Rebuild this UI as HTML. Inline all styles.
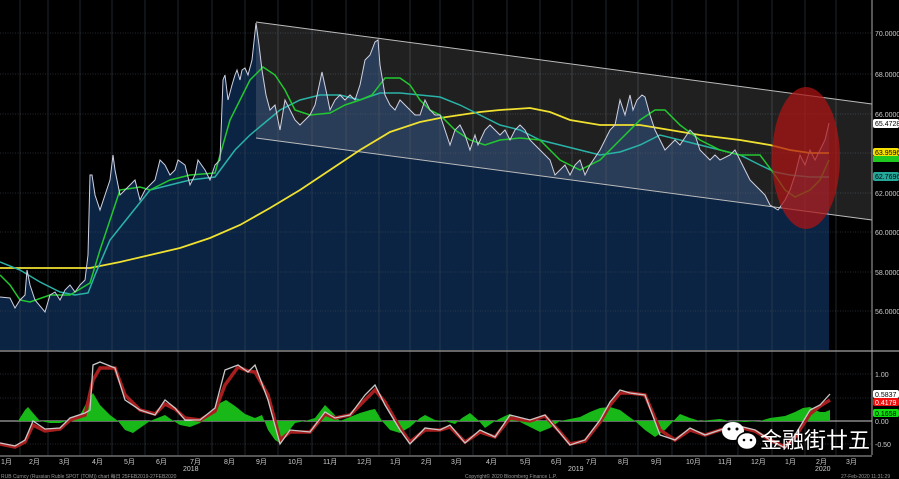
<!DOCTYPE html>
<html><head><meta charset="utf-8"><style>
html,body{margin:0;padding:0;background:#000;width:899px;height:479px;overflow:hidden}
svg{display:block}
text{font-family:"Liberation Sans","Noto Sans CJK SC",sans-serif}
</style></head><body>
<svg width="899" height="479" viewBox="0 0 899 479" xmlns="http://www.w3.org/2000/svg">
<rect width="899" height="479" fill="#000"/>
<!-- price area -->
<polygon fill="#0b2444" points="0,350 0,297 10,298 15,308 20,300 25,295 27,270 30,285 35,300 45,312 50,295 55,292 60,300 65,290 70,285 75,292 80,285 85,280 88,255 90,175 92,175 95,195 100,210 105,195 110,180 113,155 115,170 120,195 125,190 130,185 135,180 140,200 145,190 150,185 155,180 160,160 165,165 170,175 175,170 178,160 185,165 190,185 195,175 198,160 205,170 210,180 215,165 220,160 223,80 225,75 228,100 232,85 235,75 237,70 240,80 242,70 245,68 248,75 252,60 256,23 259,45 262,70 266,95 270,110 275,105 280,130 285,100 290,110 295,120 300,125 305,120 310,115 315,105 322,72 327,95 330,110 335,100 340,95 345,100 350,95 355,100 360,85 365,60 370,55 375,42 378,40 380,65 385,95 390,105 395,110 400,100 405,105 410,110 415,115 420,115 425,100 430,110 435,115 440,115 445,130 450,145 455,130 460,125 465,135 470,150 475,135 478,145 485,130 490,125 495,130 500,135 505,130 510,140 515,130 520,125 525,130 530,140 535,145 545,155 550,160 555,175 560,170 565,165 570,175 575,165 580,160 585,175 590,165 600,150 605,140 610,130 615,125 620,100 625,115 630,95 633,110 637,100 642,95 645,97 650,115 655,130 660,140 665,150 670,145 675,140 680,145 690,130 695,135 700,150 705,155 710,160 715,155 720,160 730,155 735,150 740,160 745,170 750,180 755,185 760,190 765,195 770,205 778,210 785,200 790,190 795,175 800,155 805,165 810,150 815,160 820,150 825,140 829,123 829,350"/>
<!-- grid -->
<g stroke="#3c4650" stroke-width="0.8" stroke-dasharray="1,1.5" opacity="0.8">
<line x1="0" y1="33" x2="872" y2="33"/><line x1="0" y1="74" x2="872" y2="74"/><line x1="0" y1="114" x2="872" y2="114"/><line x1="0" y1="153" x2="872" y2="153"/><line x1="0" y1="193" x2="872" y2="193"/><line x1="0" y1="232" x2="872" y2="232"/><line x1="0" y1="272" x2="872" y2="272"/><line x1="0" y1="311" x2="872" y2="311"/>
<line x1="0" y1="374" x2="872" y2="374"/><line x1="0" y1="398" x2="872" y2="398"/><line x1="0" y1="444" x2="872" y2="444"/>
</g>
<g stroke="#3c4650" stroke-width="0.8" opacity="0.7">
<line x1="20" y1="0" x2="20" y2="455"/><line x1="48" y1="0" x2="48" y2="455"/><line x1="80" y1="0" x2="80" y2="455"/><line x1="112" y1="0" x2="112" y2="455"/><line x1="145" y1="0" x2="145" y2="455"/><line x1="178" y1="0" x2="178" y2="455"/><line x1="212" y1="0" x2="212" y2="455"/><line x1="245" y1="0" x2="245" y2="455"/><line x1="278" y1="0" x2="278" y2="455"/><line x1="312" y1="0" x2="312" y2="455"/><line x1="346" y1="0" x2="346" y2="455"/><line x1="379" y1="0" x2="379" y2="455"/><line x1="410" y1="0" x2="410" y2="455"/><line x1="440" y1="0" x2="440" y2="455"/><line x1="473" y1="0" x2="473" y2="455"/><line x1="507" y1="0" x2="507" y2="455"/><line x1="540" y1="0" x2="540" y2="455"/><line x1="572" y1="0" x2="572" y2="455"/><line x1="606" y1="0" x2="606" y2="455"/><line x1="638" y1="0" x2="638" y2="455"/><line x1="672" y1="0" x2="672" y2="455"/><line x1="706" y1="0" x2="706" y2="455"/><line x1="738" y1="0" x2="738" y2="455"/><line x1="772" y1="0" x2="772" y2="455"/><line x1="805" y1="0" x2="805" y2="455"/><line x1="836" y1="0" x2="836" y2="455"/>
</g>
<!-- channel -->
<polygon fill="rgba(190,190,190,0.17)" points="256,22 872,104 872,220 256,138"/>
<line x1="256" y1="22" x2="872" y2="104" stroke="#bbb" stroke-width="1"/>
<line x1="256" y1="138" x2="872" y2="220" stroke="#bbb" stroke-width="1"/>
<!-- MAs -->
<polyline fill="none" stroke="#f0e030" stroke-width="1.8" points="0,268 50,268 90,268 120,262 150,255 180,248 210,238 240,225 270,208 300,190 330,170 360,150 390,132 420,122 440,118 460,115 480,112 500,110 530,108 550,112 570,120 600,125 640,125 670,130 700,135 740,140 770,145 790,150 810,153 829,153"/>
<polyline fill="none" stroke="#2ab3a8" stroke-width="1.5" points="0,262 20,270 40,282 60,292 75,295 88,293 95,275 110,240 130,215 150,190 170,185 190,180 215,177 235,150 250,135 262,125 280,110 300,100 320,95 340,95 360,100 380,93 400,93 420,95 440,97 460,105 480,115 500,125 520,130 540,140 560,145 580,150 600,155 620,152 640,145 660,135 680,140 700,145 720,150 740,155 760,165 775,172 790,175 810,177 829,177"/>
<polyline fill="none" stroke="#22c830" stroke-width="1.5" points="0,275 10,285 20,300 30,302 50,295 70,295 90,283 100,250 120,190 140,187 150,190 170,180 190,175 215,173 230,120 250,80 263,67 275,75 285,90 295,110 310,115 330,113 345,105 360,100 372,95 385,78 400,78 410,85 420,100 430,110 440,115 455,130 470,140 485,145 500,140 520,138 540,140 560,160 580,170 600,160 620,140 640,120 655,110 665,110 680,125 700,140 720,150 740,155 760,155 775,175 785,190 795,197 810,190 820,180 829,160"/>
<polyline fill="none" stroke="#d0d0e0" stroke-width="1" points="0,297 10,298 15,308 20,300 25,295 27,270 30,285 35,300 45,312 50,295 55,292 60,300 65,290 70,285 75,292 80,285 85,280 88,255 90,175 92,175 95,195 100,210 105,195 110,180 113,155 115,170 120,195 125,190 130,185 135,180 140,200 145,190 150,185 155,180 160,160 165,165 170,175 175,170 178,160 185,165 190,185 195,175 198,160 205,170 210,180 215,165 220,160 223,80 225,75 228,100 232,85 235,75 237,70 240,80 242,70 245,68 248,75 252,60 256,23 259,45 262,70 266,95 270,110 275,105 280,130 285,100 290,110 295,120 300,125 305,120 310,115 315,105 322,72 327,95 330,110 335,100 340,95 345,100 350,95 355,100 360,85 365,60 370,55 375,42 378,40 380,65 385,95 390,105 395,110 400,100 405,105 410,110 415,115 420,115 425,100 430,110 435,115 440,115 445,130 450,145 455,130 460,125 465,135 470,150 475,135 478,145 485,130 490,125 495,130 500,135 505,130 510,140 515,130 520,125 525,130 530,140 535,145 545,155 550,160 555,175 560,170 565,165 570,175 575,165 580,160 585,175 590,165 600,150 605,140 610,130 615,125 620,100 625,115 630,95 633,110 637,100 642,95 645,97 650,115 655,130 660,140 665,150 670,145 675,140 680,145 690,130 695,135 700,150 705,155 710,160 715,155 720,160 730,155 735,150 740,160 745,170 750,180 755,185 760,190 765,195 770,205 778,210 785,200 790,190 795,175 800,155 805,165 810,150 815,160 820,150 825,140 829,123"/>
<ellipse cx="806" cy="158" rx="34" ry="71" fill="rgba(175,20,20,0.72)"/>
<!-- separator -->
<line x1="0" y1="351" x2="899" y2="351" stroke="#888" stroke-width="1.5"/>
<line x1="872" y1="0" x2="872" y2="455" stroke="#aaa" stroke-width="1"/>
<line x1="0" y1="421" x2="872" y2="421" stroke="#ccc" stroke-width="1"/>
<line x1="0" y1="456" x2="872" y2="456" stroke="#aaa" stroke-width="1"/>
<!-- histogram -->
<polygon fill="#19b819" points="0,421 18,421 25,410 28,407 33,413 40,421 50,423 60,423 70,420 80,415 88,400 93,393 100,405 110,415 118,421 125,430 133,433 140,428 150,421 160,417 165,415 172,420 180,425 190,427 200,423 210,414 220,403 226,400 235,406 245,414 255,418 262,415 268,430 275,440 280,443 288,432 295,423 305,421 315,418 325,405 332,412 340,421 350,417 360,413 370,410 375,409 382,421 390,430 400,433 410,427 420,418 425,415 435,420 445,421 455,424 462,418 470,413 478,420 485,428 495,421 505,416 510,414 518,421 528,426 540,432 550,428 560,421 570,419 580,417 590,412 600,408 610,407 620,410 628,416 635,421 645,430 655,437 665,430 680,414 690,418 700,421 710,420 720,419 730,421 745,422 760,421 770,418 785,416 795,412 803,408 810,407 815,410 820,412 825,412 830,410 830,421"/>
<!-- oscillator lines -->
<polyline fill="none" stroke="#a81e1e" stroke-width="3.5" points="0,444 15,447 25,442 33,425 45,431 60,429 70,420 85,415 93,380 100,368 115,368 125,395 140,410 155,414 165,404 175,409 185,418 200,420 215,411 225,385 238,367 248,371 255,372 268,395 280,440 290,432 310,432 325,414 335,418 350,415 365,400 375,390 385,402 400,428 410,442 425,430 440,430 450,427 465,442 480,432 495,437 510,418 530,421 545,416 560,432 570,444 585,441 600,422 610,405 620,393 630,393 645,395 660,430 675,440 690,430 705,435 720,430 735,426 755,431 770,440 785,447 795,437 810,414 820,406 830,400"/>
<polyline fill="none" stroke="#c8c8c8" stroke-width="1.3" points="0,443 15,446 25,440 33,421 45,429 60,428 70,418 85,413 90,410 93,365 100,362 115,368 125,400 140,410 155,415 165,400 175,408 185,420 200,420 215,408 225,370 238,365 248,372 255,365 268,400 280,444 290,430 310,432 325,412 335,418 350,415 365,395 375,385 385,405 400,430 410,444 425,428 440,430 450,425 465,443 480,430 495,437 510,415 530,420 545,415 560,433 570,445 585,440 600,420 610,402 620,390 630,393 645,395 660,435 675,440 690,428 705,435 720,430 735,425 755,430 770,440 785,448 795,435 810,410 820,405 830,394"/>
<!-- axis labels -->
<g fill="#ccc" font-size="7">
<text x="875" y="36">70.0000</text><text x="875" y="77">68.0000</text><text x="875" y="117">66.0000</text><text x="875" y="196">62.0000</text><text x="875" y="235">60.0000</text><text x="875" y="275">58.0000</text><text x="875" y="314">56.0000</text>
<text x="875" y="377">1.00</text><text x="875" y="424">0.00</text><text x="875" y="447">-0.50</text>
</g>
<g font-size="7">
<rect x="873" y="119" width="26" height="9" fill="#fff" rx="2"/><text x="875" y="126" fill="#000">65.4728</text>
<rect x="873" y="148" width="26" height="8" fill="#f5e000" rx="2"/><text x="875" y="155" fill="#000">63.9596</text>
<rect x="873" y="156" width="26" height="6" fill="#1ec81e"/>
<rect x="873" y="172" width="26" height="9" fill="#25a89a" rx="2"/><text x="875" y="179" fill="#000">62.7696</text>
<rect x="873" y="390" width="26" height="8" fill="#fff" rx="2"/><text x="875" y="397" fill="#000">0.5837</text>
<rect x="873" y="398" width="26" height="8" fill="#f01010" rx="2"/><text x="875" y="405" fill="#fff">0.4179</text>
<rect x="873" y="409" width="26" height="8" fill="#10e010" rx="2"/><text x="875" y="416" fill="#000">0.1658</text>
</g>
<g fill="#ccc" font-size="7">
<text x="1" y="464">1月</text><text x="29" y="464">2月</text><text x="59" y="464">3月</text><text x="92" y="464">4月</text><text x="124" y="464">5月</text><text x="156" y="464">6月</text><text x="190" y="464">7月</text><text x="224" y="464">8月</text><text x="256" y="464">9月</text><text x="288" y="464">10月</text><text x="323" y="464">11月</text><text x="357" y="464">12月</text><text x="390" y="464">1月</text><text x="421" y="464">2月</text><text x="451" y="464">3月</text><text x="486" y="464">4月</text><text x="520" y="464">5月</text><text x="551" y="464">6月</text><text x="586" y="464">7月</text><text x="618" y="464">8月</text><text x="651" y="464">9月</text><text x="686" y="464">10月</text><text x="718" y="464">11月</text><text x="751" y="464">12月</text><text x="785" y="464">1月</text><text x="816" y="464">2月</text><text x="846" y="464">3月</text>
<text x="183" y="471">2018</text><text x="568" y="471">2019</text><text x="815" y="471">2020</text>
</g>
<g fill="#999" font-size="5">
<text x="1" y="478">RUB Curncy (Russian Ruble SPOT (TOM)) chart  每日 25FEB2019-27FEB2020</text>
<text x="465" y="478">Copyright© 2020 Bloomberg Finance L.P.</text>
<text x="841" y="478">27-Feb-2020 11:31:29</text>
</g>
<!-- watermark -->
<g fill="#fff">
<ellipse cx="733" cy="431" rx="11" ry="9"/>
<ellipse cx="747" cy="441" rx="10" ry="8.5" stroke="#000" stroke-width="1.5"/>
<circle cx="729" cy="429" r="1.5" fill="#000"/><circle cx="737" cy="429" r="1.5" fill="#000"/>
<circle cx="744" cy="440" r="1.3" fill="#000"/><circle cx="751" cy="440" r="1.3" fill="#000"/>
</g>
<text x="760" y="448" fill="#fff" font-size="22" font-family="'Noto Sans CJK SC',sans-serif">金融街廿五</text>
</svg>
</body></html>
